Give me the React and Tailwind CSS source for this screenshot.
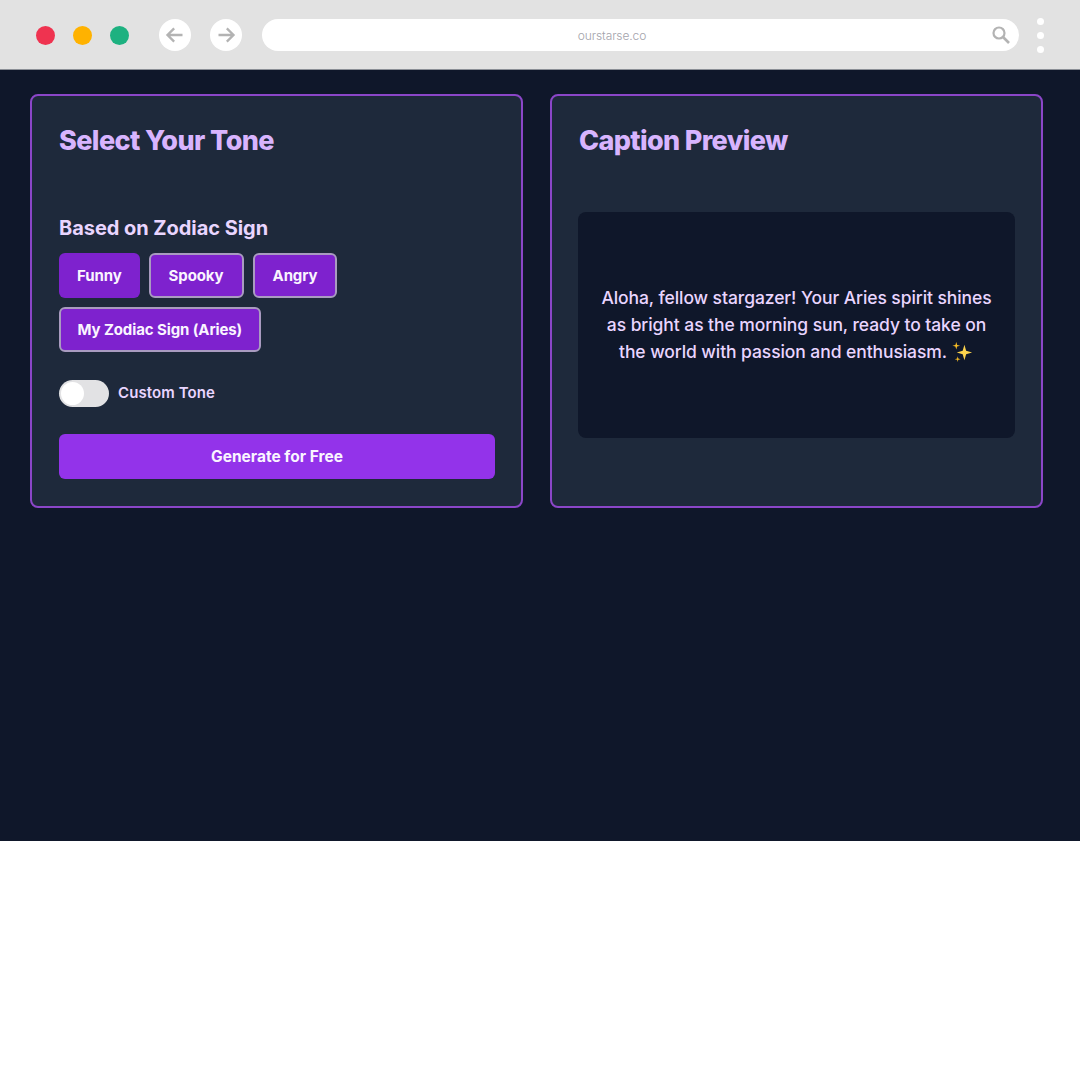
const font = { fontFamily: "Inter, 'Noto Sans', sans-serif" };

function ToneButton({ label, active, wide }) {
  return (
    <button
      type="button"
      className={`h-[45px] rounded-md bg-[#7e22ce] pt-[1px] text-[15px] font-bold tracking-[-0.1px] text-[#faf5ff] ${
        wide ? "px-[16.5px]" : "px-[18px]"
      } ${active ? "" : "border-2 border-[#a99bc0]"}`}
    >
      {label}
    </button>
  );
}

function Sparkles() {
  return (
    <svg viewBox="0 0 24 24" className="ml-[4px] inline-block h-[23px] w-[23px] align-[-5px]">
      <path d="M14 5 L15.8 11.2 L22 13 L15.8 14.8 L14 21 L12.2 14.8 L6 13 L12.2 11.2 Z" fill="#fcd34d" />
      <path d="M5.5 2 L6.4 5.1 L9.5 6 L6.4 6.9 L5.5 10 L4.6 6.9 L1.5 6 L4.6 5.1 Z" fill="#fbbf24" />
      <path d="M7 17 L7.6 19.4 L10 20 L7.6 20.6 L7 23 L6.4 20.6 L4 20 L6.4 19.4 Z" fill="#fbbf24" />
    </svg>
  );
}

function BrowserBar() {
  return (
    <div className="flex h-[70px] items-center border-b border-[#8b8f96] bg-[#e2e2e2] pl-[36px] pt-[1px]">
      <div className="flex gap-[18px]">
        <span className="h-[19px] w-[19px] rounded-full bg-[#ef3350]" />
        <span className="h-[19px] w-[19px] rounded-full bg-[#ffb200]" />
        <span className="h-[19px] w-[19px] rounded-full bg-[#1db180]" />
      </div>
      <div className="ml-[30px] flex h-[32px] w-[32px] items-center justify-center rounded-full bg-white">
        <svg viewBox="0 0 24 24" className="h-[20px] w-[20px]" fill="none" stroke="#b3b3b3" strokeWidth="2.8">
          <path d="M21 12H3M11 4l-8 8 8 8" />
        </svg>
      </div>
      <div className="ml-[19px] flex h-[32px] w-[32px] items-center justify-center rounded-full bg-white">
        <svg viewBox="0 0 24 24" className="h-[20px] w-[20px]" fill="none" stroke="#b3b3b3" strokeWidth="2.8">
          <path d="M3 12h18M13 4l8 8-8 8" />
        </svg>
      </div>
      <div className="relative ml-[20px] flex h-[32px] w-[757px] items-center justify-center rounded-full bg-white pr-[57px] pt-[1px]">
        <span className="text-[12px] font-light tracking-[-0.1px] text-[#a3a3ab]">ourstarse.co</span>
        <svg viewBox="0 0 18 18" className="absolute right-[9px] top-[7px] h-[18px] w-[18px]" fill="none" stroke="#b3b3b3" strokeWidth="2.2">
          <circle cx="7" cy="7" r="5.5" />
          <path d="M11 11l6 6" strokeWidth="2.6" />
        </svg>
      </div>
      <div className="ml-[18px] flex flex-col gap-[7px]">
        <span className="h-[7px] w-[7px] rounded-full bg-white" />
        <span className="h-[7px] w-[7px] rounded-full bg-white" />
        <span className="h-[7px] w-[7px] rounded-full bg-white" />
      </div>
    </div>
  );
}

export default function App() {
  return (
    <div className="h-[1080px] w-[1080px] bg-white" style={font}>
      <BrowserBar />
      <div className="h-[771px] bg-[#0f172a] pl-[30px] pt-[24px]">
        <div className="flex gap-[27px]">
          <section className="h-[414px] w-[493px] rounded-lg border-2 border-[#8b46c8] bg-[#1e293b] pl-[27px] pr-[26px] pt-[27px]">
            <h2 className="text-[27px] font-extrabold leading-[36px] tracking-[-0.6px] text-[#d8b4fe]">Select Your Tone</h2>
            <h3 className="mt-[55px] text-[20px] font-bold leading-[28px] tracking-[-0.05px] text-[#e9d5ff]">Based on Zodiac Sign</h3>
            <div className="mt-[11px] flex flex-wrap gap-[9px]">
              <ToneButton label="Funny" active />
              <ToneButton label="Spooky" />
              <ToneButton label="Angry" />
              <ToneButton label="My Zodiac Sign (Aries)" wide />
            </div>
            <div className="mt-[28px] flex items-center gap-[9px]">
              <div className="flex h-[27px] w-[50px] items-center rounded-full bg-[#e2e2e4] pl-[2px]">
                <span className="h-[23px] w-[23px] rounded-full bg-white" />
              </div>
              <span className="text-[15px] font-semibold tracking-[0.1px] text-[#e9d5ff]">Custom Tone</span>
            </div>
            <button
              type="button"
              className="mt-[27px] h-[45px] w-full rounded-md bg-[#9333ea] text-[15.5px] font-bold text-[#faf5ff]"
            >
              Generate for Free
            </button>
          </section>
          <section className="h-[414px] w-[493px] rounded-lg border-2 border-[#8b46c8] bg-[#1e293b] px-[26px] pt-[27px]">
            <h2 className="pl-[1px] text-[27px] font-extrabold leading-[36px] tracking-[-0.65px] text-[#d8b4fe]">Caption Preview</h2>
            <div className="mt-[53px] flex h-[226px] items-center justify-center rounded-lg bg-[#0f172a] px-[19px] pb-[2px]">
              <p className="text-center text-[17.5px] font-medium leading-[27px] tracking-[-0.08px] text-[#e9d5ff]">
                Aloha, fellow stargazer! Your Aries spirit shines as bright as the morning sun, ready to take on the
                world with passion and enthusiasm.
                <Sparkles />
              </p>
            </div>
          </section>
        </div>
      </div>
    </div>
  );
}
